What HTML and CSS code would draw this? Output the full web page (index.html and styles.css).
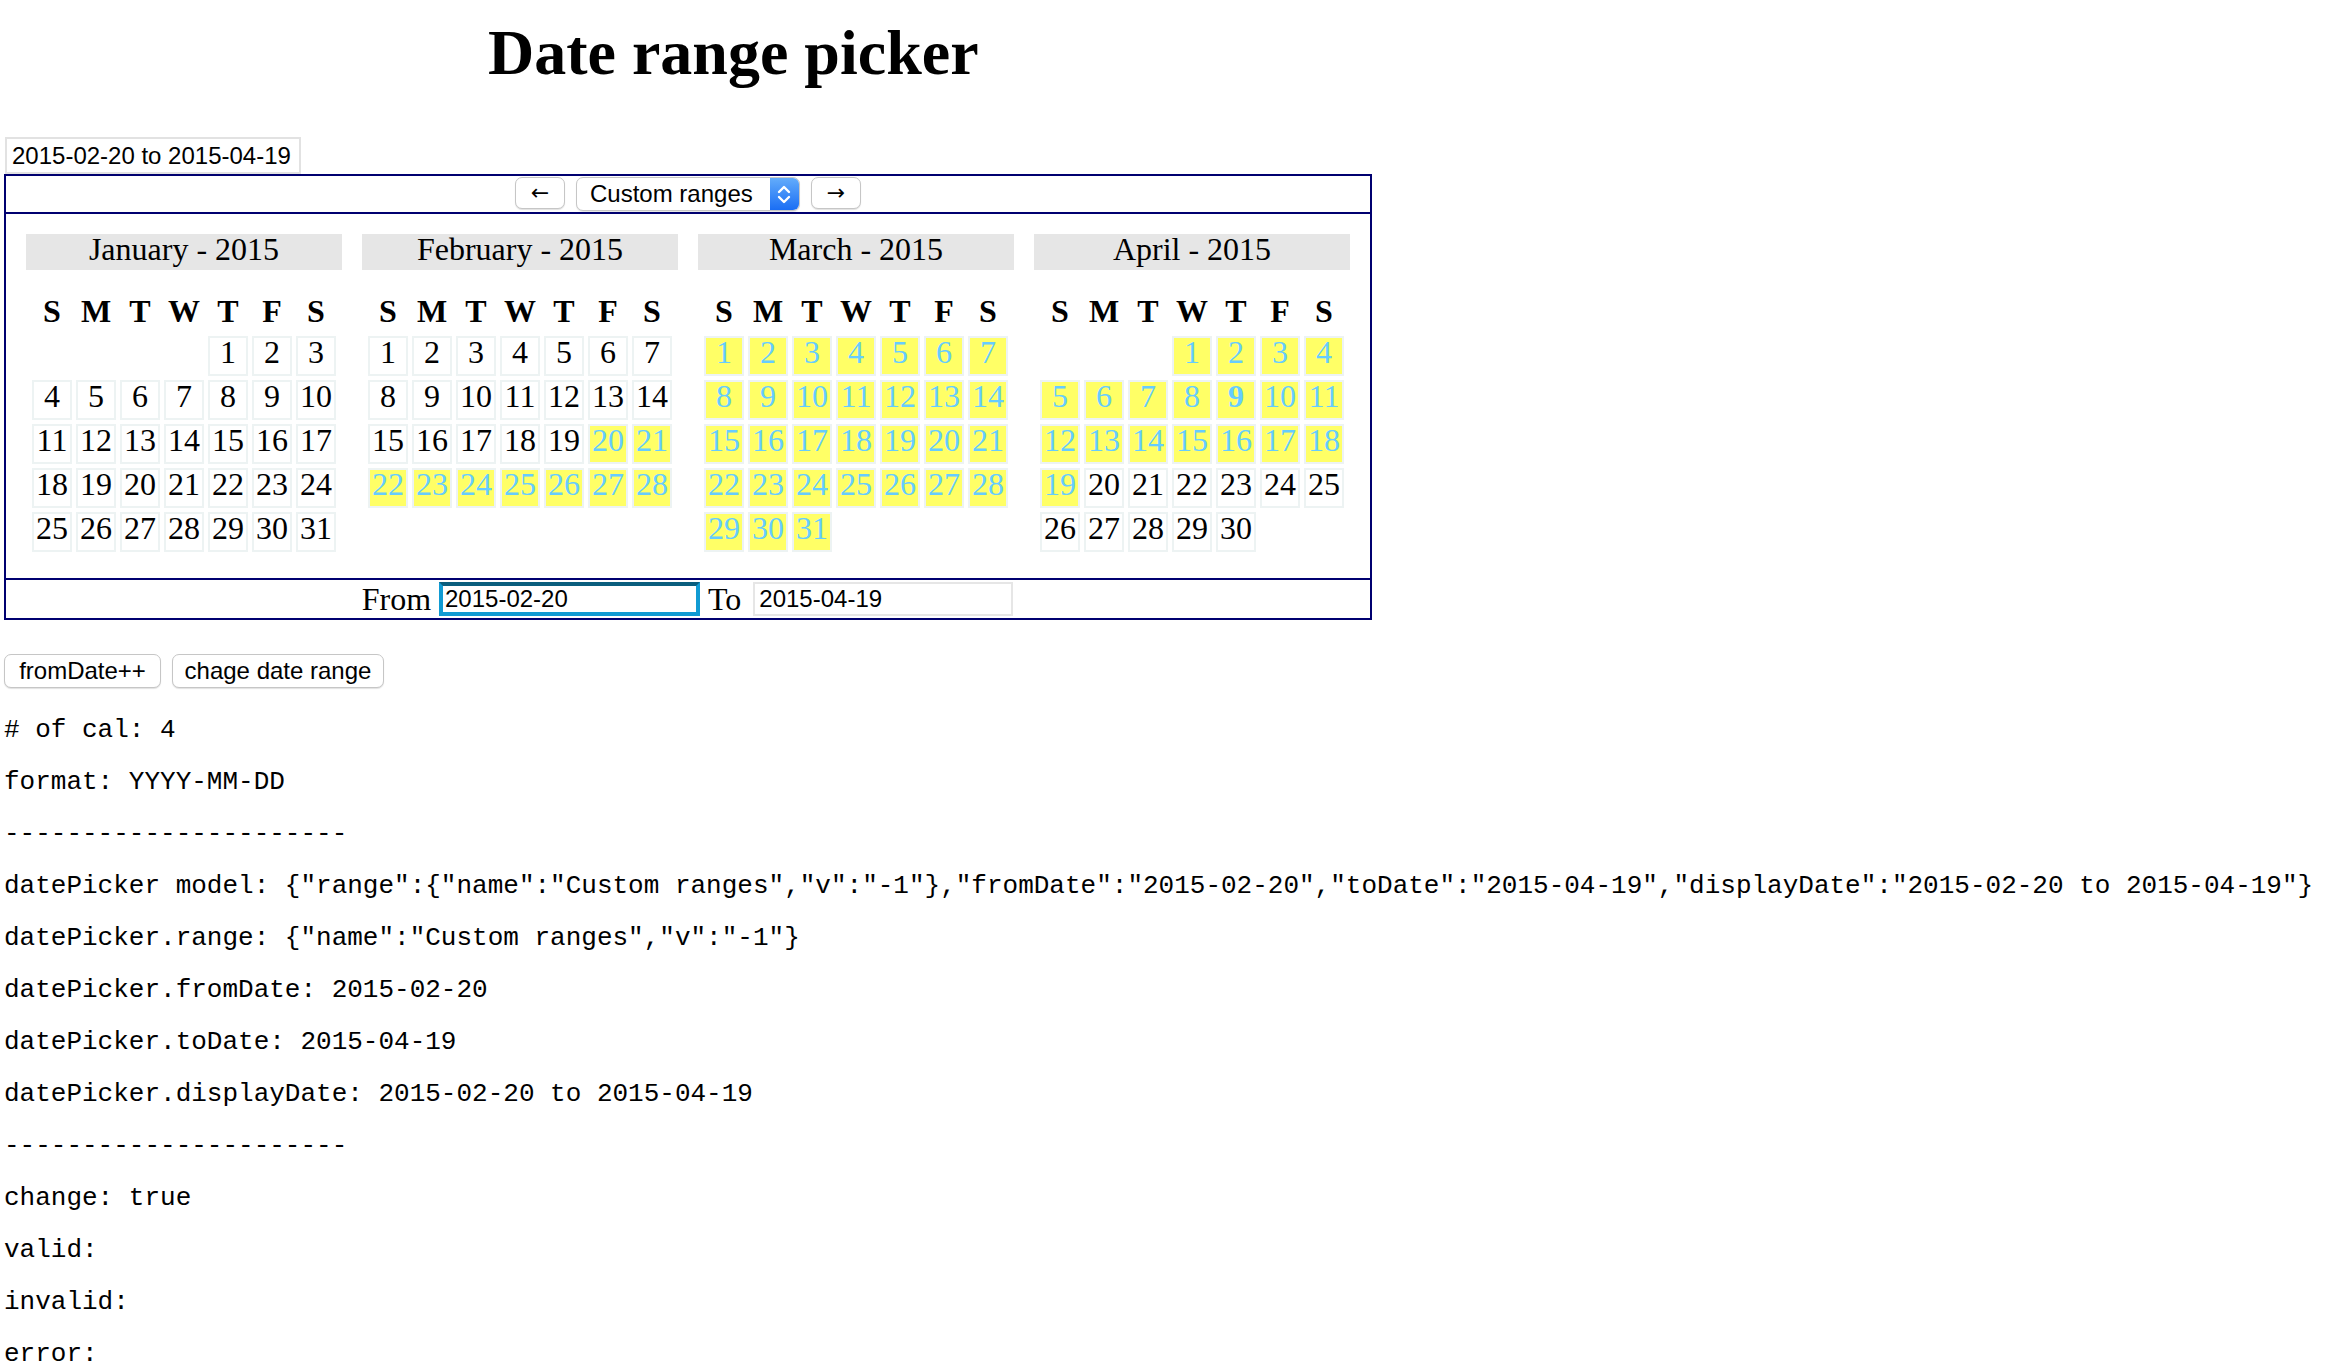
FILE: index.html
```html
<!DOCTYPE html>
<html>
<head>
<meta charset="utf-8">
<title>Date range picker</title>
<link rel="stylesheet" href="styles.css">
</head>
<body>
<h1 class="title">Date range picker</h1>
<input class="display" type="text" value="2015-02-20 to 2015-04-19">
<div class="picker">
  <div class="nav">
    <button class="navbtn">←</button>
    <div class="select"><span class="select-text">Custom ranges</span><span class="select-arrow"><svg width="28" height="32" viewBox="0 0 28 32"><polyline points="9,14 14,9 19,14" fill="none" stroke="#fff" stroke-width="2.4" stroke-linecap="round" stroke-linejoin="round"/><polyline points="9,19 14,24 19,19" fill="none" stroke="#fff" stroke-width="2.4" stroke-linecap="round" stroke-linejoin="round"/></svg></span></div>
    <button class="navbtn">→</button>
  </div>
  <div class="months">
    <div class="cal">
      <div class="cal-title">January - 2015</div>
      <table class="grid">
        <tr><th>S</th><th>M</th><th>T</th><th>W</th><th>T</th><th>F</th><th>S</th></tr>
        <tr><td class="e"></td><td class="e"></td><td class="e"></td><td class="e"></td><td>1</td><td>2</td><td>3</td></tr>
        <tr><td>4</td><td>5</td><td>6</td><td>7</td><td>8</td><td>9</td><td>10</td></tr>
        <tr><td>11</td><td>12</td><td>13</td><td>14</td><td>15</td><td>16</td><td>17</td></tr>
        <tr><td>18</td><td>19</td><td>20</td><td>21</td><td>22</td><td>23</td><td>24</td></tr>
        <tr><td>25</td><td>26</td><td>27</td><td>28</td><td>29</td><td>30</td><td>31</td></tr>
      </table>
    </div>
    <div class="cal">
      <div class="cal-title">February - 2015</div>
      <table class="grid">
        <tr><th>S</th><th>M</th><th>T</th><th>W</th><th>T</th><th>F</th><th>S</th></tr>
        <tr><td>1</td><td>2</td><td>3</td><td>4</td><td>5</td><td>6</td><td>7</td></tr>
        <tr><td>8</td><td>9</td><td>10</td><td>11</td><td>12</td><td>13</td><td>14</td></tr>
        <tr><td>15</td><td>16</td><td>17</td><td>18</td><td>19</td><td class="sel">20</td><td class="sel">21</td></tr>
        <tr><td class="sel">22</td><td class="sel">23</td><td class="sel">24</td><td class="sel">25</td><td class="sel">26</td><td class="sel">27</td><td class="sel">28</td></tr>
      </table>
    </div>
    <div class="cal">
      <div class="cal-title">March - 2015</div>
      <table class="grid">
        <tr><th>S</th><th>M</th><th>T</th><th>W</th><th>T</th><th>F</th><th>S</th></tr>
        <tr><td class="sel">1</td><td class="sel">2</td><td class="sel">3</td><td class="sel">4</td><td class="sel">5</td><td class="sel">6</td><td class="sel">7</td></tr>
        <tr><td class="sel">8</td><td class="sel">9</td><td class="sel">10</td><td class="sel">11</td><td class="sel">12</td><td class="sel">13</td><td class="sel">14</td></tr>
        <tr><td class="sel">15</td><td class="sel">16</td><td class="sel">17</td><td class="sel">18</td><td class="sel">19</td><td class="sel">20</td><td class="sel">21</td></tr>
        <tr><td class="sel">22</td><td class="sel">23</td><td class="sel">24</td><td class="sel">25</td><td class="sel">26</td><td class="sel">27</td><td class="sel">28</td></tr>
        <tr><td class="sel">29</td><td class="sel">30</td><td class="sel">31</td><td class="e"></td><td class="e"></td><td class="e"></td><td class="e"></td></tr>
      </table>
    </div>
    <div class="cal">
      <div class="cal-title">April - 2015</div>
      <table class="grid">
        <tr><th>S</th><th>M</th><th>T</th><th>W</th><th>T</th><th>F</th><th>S</th></tr>
        <tr><td class="e"></td><td class="e"></td><td class="e"></td><td class="sel">1</td><td class="sel">2</td><td class="sel">3</td><td class="sel">4</td></tr>
        <tr><td class="sel">5</td><td class="sel">6</td><td class="sel">7</td><td class="sel">8</td><td class="sel today">9</td><td class="sel">10</td><td class="sel">11</td></tr>
        <tr><td class="sel">12</td><td class="sel">13</td><td class="sel">14</td><td class="sel">15</td><td class="sel">16</td><td class="sel">17</td><td class="sel">18</td></tr>
        <tr><td class="sel">19</td><td>20</td><td>21</td><td>22</td><td>23</td><td>24</td><td>25</td></tr>
        <tr><td>26</td><td>27</td><td>28</td><td>29</td><td>30</td><td class="e"></td><td class="e"></td></tr>
      </table>
    </div>
  </div>
  <div class="footer">
    <span class="lbl">From</span>
    <input class="date-input focused" type="text" value="2015-02-20">
    <span class="lbl">To</span>
    <input class="date-input to" type="text" value="2015-04-19">
  </div>
</div>
<div class="actions">
  <button class="btn btn-from">fromDate++</button>
  <button class="btn btn-range">chage date range</button>
</div>
<p class="mono"># of cal: 4</p>
<p class="mono">format: YYYY-MM-DD</p>
<p class="mono">----------------------</p>
<p class="mono">datePicker model: {"range":{"name":"Custom ranges","v":"-1"},"fromDate":"2015-02-20","toDate":"2015-04-19","displayDate":"2015-02-20 to 2015-04-19"}</p>
<p class="mono">datePicker.range: {"name":"Custom ranges","v":"-1"}</p>
<p class="mono">datePicker.fromDate: 2015-02-20</p>
<p class="mono">datePicker.toDate: 2015-04-19</p>
<p class="mono">datePicker.displayDate: 2015-02-20 to 2015-04-19</p>
<p class="mono">----------------------</p>
<p class="mono">change: true</p>
<p class="mono">valid:</p>
<p class="mono">invalid:</p>
<p class="mono last">error:</p>
</body>
</html>
```
FILE: styles.css
```css
* { box-sizing: border-box; }
html, body { margin: 0; padding: 0; background: #fff; }
body {
  padding: 0 0 0 4px;
  font-family: "Liberation Serif", "Times New Roman", serif;
  color: #000;
}
.title {
  margin: 0;
  padding: 21px 0 0 484px;
  height: 85px;
  font: bold 64px/64px "Liberation Serif", serif;
  white-space: nowrap;
}
.display {
  display: block;
  margin: 52px 0 0 1px;
  width: 296px;
  height: 37px;
  padding: 0 0 0 5px;
  border: 2px solid #e2e2e2;
  border-radius: 0;
  font: 24px "Liberation Sans", Arial, sans-serif;
  color: #000;
  background: #fff;
  outline: none;
}
.picker {
  width: 1368px;
  border: 2px solid #000070;
}
.nav {
  height: 38px;
  border-bottom: 2px solid #000070;
  display: flex;
  justify-content: center;
  align-items: flex-start;
  padding-top: 1px;
  gap: 10px;
}
.navbtn {
  width: 50px;
  height: 32px;
  margin: 0 1px;
  padding: 0;
  border: 1px solid #c6c6c6;
  border-radius: 7px;
  background: #fff;
  box-shadow: 0 1px 1px rgba(0,0,0,0.12);
  font: 22px "DejaVu Sans", sans-serif;
  color: #000;
  line-height: 28px;
}
.select {
  display: flex;
  width: 224px;
  height: 34px;
  border: 1px solid #c6c6c6;
  border-radius: 7px;
  background: #fff;
  box-shadow: 0 1px 1px rgba(0,0,0,0.1);
  overflow: hidden;
}
.select-text {
  flex: 1;
  padding-left: 13px;
  font: 24px/32px "Liberation Sans", Arial, sans-serif;
  color: #000;
}
.select-arrow {
  width: 29px;
  height: 32px;
  background: linear-gradient(#63acfb, #1a6ef4);
  display: flex;
}
.months {
  display: flex;
  gap: 20px;
  padding: 20px 20px 22px;
  height: 366px;
  border-bottom: 2px solid #000070;
}
.cal { width: 316px; }
.cal-title {
  height: 36px;
  background: #e6e6e6;
  text-align: center;
  font-size: 32px;
  line-height: 30px;
  padding-bottom: 6px;
}
.grid {
  margin: 18px auto 0;
  border-collapse: separate;
  border-spacing: 4px;
}
.grid th, .grid td {
  box-sizing: content-box;
  width: 36px;
  text-align: center;
  font-size: 32px;
  border: 2px solid transparent;
}
.grid th {
  line-height: 34px;
  padding: 0 0 2px;
  font-weight: bold;
}
.grid td {
  line-height: 29px;
  height: 29px;
  padding: 0 0 7px;
  border-color: #edf3f3;
}
.grid td.e { border-color: transparent; }
.grid td.sel { background: #ffff66; color: #66ccff; }
.grid td.today { font-weight: bold; }
.footer {
  height: 38px;
  display: flex;
  justify-content: center;
  align-items: center;
  gap: 8px;
  padding-right: 1px;
}
.lbl {
  font-size: 32px;
  line-height: 34px;
}
.date-input {
  width: 260px;
  height: 34px;
  padding: 0 0 0 4px;
  border: 2px solid #e6e6e6;
  border-radius: 0;
  font: 24px "Liberation Sans", Arial, sans-serif;
  color: #000;
  background: #fff;
  outline: none;
}
.date-input.to { margin-left: 4px; }
.date-input.focused {
  width: 261px;
  border: 4px solid #119bd3;
  border-top-color: #0a5e7e;
  padding-left: 2px;
}
.actions {
  margin: 34px 0 29px;
  display: flex;
  gap: 11px;
}
.btn {
  height: 34px;
  padding: 0;
  border: 1px solid #c6c6c6;
  border-radius: 7px;
  background: #fff;
  box-shadow: 0 1px 1px rgba(0,0,0,0.12);
  font: 24px "Liberation Sans", Arial, sans-serif;
  color: #000;
}
.btn-from { width: 157px; }
.btn-range { width: 212px; }
.mono {
  margin: 26px 0;
  font: 26px/26px "Liberation Mono", "Courier New", monospace;
  white-space: pre;
}
.mono.last { margin-bottom: 0; }
```
